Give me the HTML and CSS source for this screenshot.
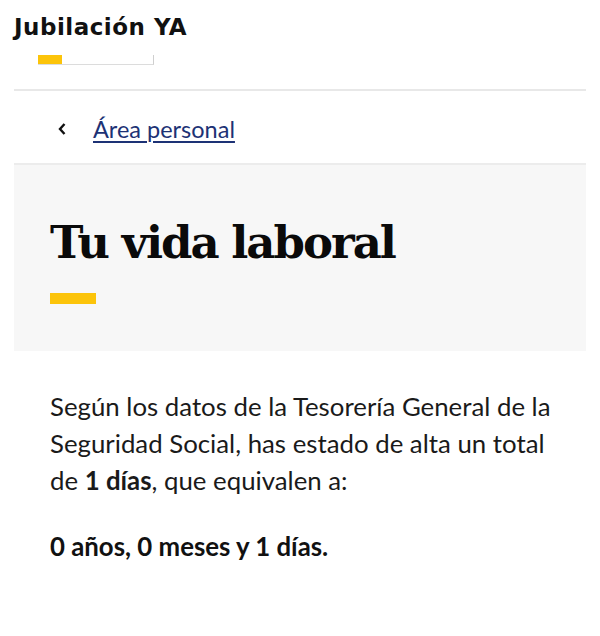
FILE: index.html
```html
<!DOCTYPE html>
<html lang="es">
<head>
<meta charset="utf-8">
<link rel="stylesheet" href="styles.css">
</head>
<body>
<div class="page">
  <header class="top">
    <div class="brand">Jubilación YA</div>
    <div class="progress"><div class="progress-fill"></div></div>
  </header>
  <nav class="back">
    <span class="chev">
      <svg width="12" height="16" viewBox="0 0 12 16"><path d="M8.5 3 L4 8 L8.5 13" fill="none" stroke="#111" stroke-width="2.4"/></svg>
    </span>
    <a href="#" class="back-link">Área personal</a>
  </nav>
  <section class="hero">
    <h1 class="title">Tu vida laboral</h1>
    <div class="accent"></div>
  </section>
  <section class="content">
    <p class="lead">Según los datos de la Tesorería General de la Seguridad Social, has estado de alta un total de <b>1 días</b>, que equivalen a:</p>
    <p class="total">0 años, 0 meses y 1 días.</p>
  </section>
</div>
</body>
</html>
```
FILE: styles.css
```css
* { box-sizing: border-box; }
html, body { margin: 0; padding: 0; background: #fff; }
body { font-family: Lato, "Open Sans", sans-serif; color: #1a1a1a; }
.page { padding: 0 14px; }
.top { border-bottom: 2px solid #e8e8e8; padding-top: 12px; height: 91px; }
.brand { font-family: "DejaVu Sans", sans-serif; font-weight: 700; font-size: 23px; line-height: 30px; color: #111; letter-spacing: 0.5px; }
.progress { margin: 13px 0 0 24px; width: 116px; height: 10px; border-bottom: 1px solid #dcdcdc; border-right: 1px solid #cfcfcf; }
.progress-fill { width: 24px; height: 9px; background: #fcc40a; }
.back { display: flex; align-items: center; height: 74px; padding: 4px 0 0 42px; border-bottom: 2px solid #ececec; }
.chev { width: 37px; display: flex; align-items: center; }
.back-link { font-size: 23.5px; color: #1d3275; text-decoration: underline; text-underline-offset: 3px; text-decoration-thickness: 1.5px; }
.hero { background: #f7f7f7; padding: 50px 36px 46px; height: 186px; }
.title { margin: 0; font-family: "DejaVu Serif", serif; font-weight: 700; font-size: 45px; line-height: 56px; color: #0a0a0a; letter-spacing: -2px; }
.accent { margin-top: 22px; width: 46px; height: 11px; background: #fcc40a; }
.content { padding: 37px 24px 30px 36px; }
.lead { margin: 0; font-size: 25.8px; line-height: 37px; color: #1a1a1a; }
.lead b { font-weight: 700; }
.total { margin: 29px 0 0; font-size: 25.8px; line-height: 37px; font-weight: 700; color: #111; }
```
